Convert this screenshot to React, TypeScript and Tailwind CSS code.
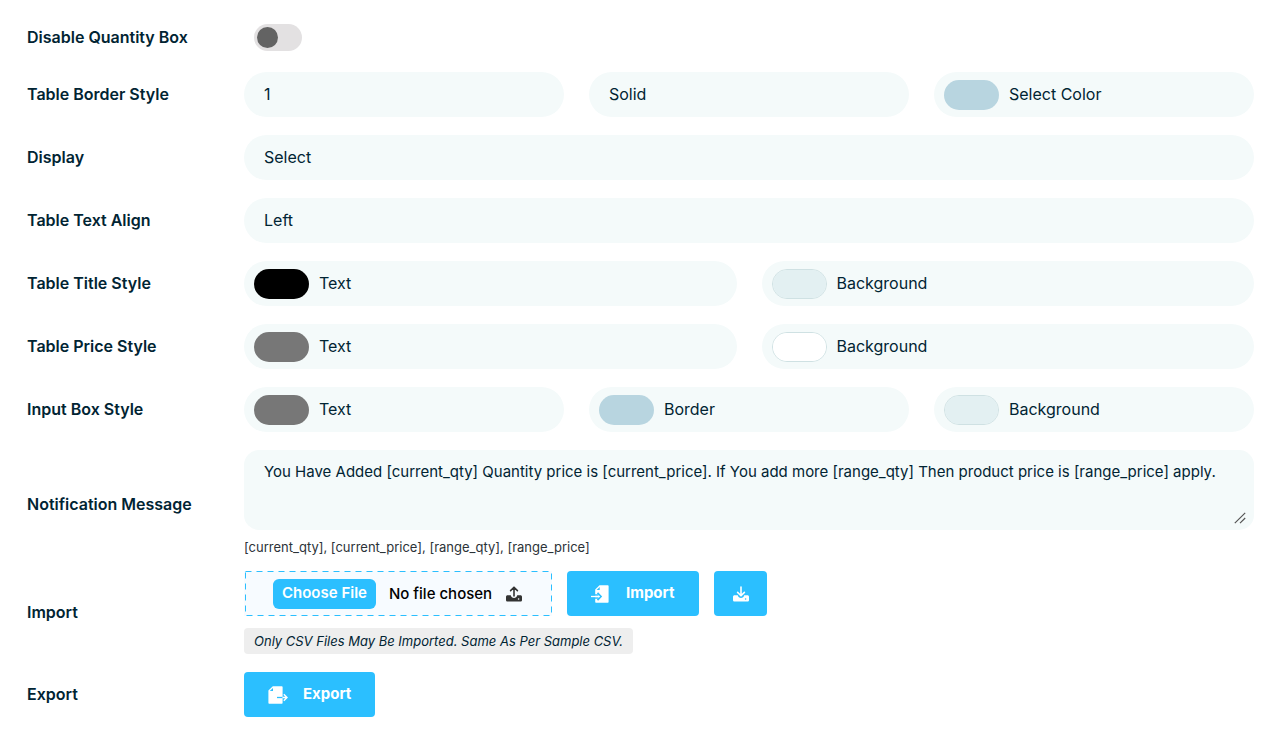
import React, { useState } from "react";

const fieldClass =
    "w-full h-[45px] rounded-full bg-[#f4fafa] px-5 pb-0.5 text-base text-[#012433] appearance-none outline-none";

const Row = ({ label, htmlFor, className = "mb-[18px]", children }: {
    label: string;
    htmlFor?: string;
    className?: string;
    children: React.ReactNode;
}) => {
    return (
        <div className={`flex items-center ${className}`}>
            <label htmlFor={htmlFor} className="w-[217px] shrink-0 pb-0.5 text-base font-semibold text-[#012433]">{label}</label>
            <div className="flex-1 min-w-0">{children}</div>
        </div>
    );
};

const SelectField = ({ id, label, options }: { id: string; label?: string; options: string[] }) => {
    const [value, setValue] = useState(options[0]);
    return (
        <select id={id} aria-label={label} value={value} onChange={(e) => setValue(e.target.value)} className={fieldClass}>
            {options.map((o) => <option key={o}>{o}</option>)}
        </select>
    );
};

const ColorField = ({ id, label, color, outlined }: { id: string; label: string; color: string; outlined?: boolean }) => {
    const [value, setValue] = useState(color);
    return (
        <div className="flex h-[45px] items-center gap-[10px] rounded-full bg-[#f4fafa] px-[10px]">
            <input
                id={id}
                type="color"
                value={value}
                onChange={(e) => setValue(e.target.value)}
                className={`h-[30px] w-[55px] shrink-0 cursor-pointer appearance-none overflow-hidden rounded-full p-0 [&::-webkit-color-swatch-wrapper]:p-0 [&::-webkit-color-swatch]:border-0 ${outlined ? "border border-[#cfe1e3]" : ""}`}
            />
            <label htmlFor={id} className="pb-0.5 text-base text-[#012433]">{label}</label>
        </div>
    );
};

// arrow over a tray, pointing up (upload) or down (download)
const TrayIcon = ({ up }: { up?: boolean }) => (
    <svg width="16" height="16" viewBox="0 0 16 16" fill="none" aria-hidden="true" className="shrink-0">
        <path fillRule="evenodd" fill="currentColor" d="M1.6 9.2H4.8C5.2 11 6.4 12 8 12S10.8 11 11.2 9.2H14.4C15.3 9.2 16 9.9 16 10.8V14C16 14.9 15.3 15.6 14.4 15.6H1.6C.7 15.6 0 14.9 0 14V10.8C0 9.9.7 9.2 1.6 9.2ZM12.6 12.2A.8.8 0 1 0 12.6 13.8A.8.8 0 1 0 12.6 12.2Z" />
        <path stroke="currentColor" strokeWidth="1.6" strokeLinecap="round" strokeLinejoin="round" d={up ? "M8 10V1.3M4.6 4.6L8 1.2L11.4 4.6" : "M8 1V9.6M4.6 6.4L8 9.8L11.4 6.4"} />
    </svg>
);

const ImportIcon = () => (
    <svg width="18" height="18" viewBox="0 0 18 18" fill="none" aria-hidden="true">
        <path fill="#fff" d="M8.5 .3H16.6C17.2 .3 17.6 .7 17.6 1.3V16.7C17.6 17.3 17.2 17.7 16.6 17.7H5.2C4.6 17.7 4.2 17.3 4.2 16.7V4.6Z" />
        <path fill="#2bbfff" d="M8.7 2V5.1H5.6Z" />
        <path stroke="#2bbfff" strokeWidth="1.5" d="M4 9.9H7.5M4 13.1H7.5" />
        <path stroke="#2bbfff" strokeWidth="1.7" d="M6.5 7.8L10 11.5L6.5 15.2" />
        <path stroke="#fff" strokeWidth="1.3" d="M0 11.5H8.5" />
    </svg>
);

const ExportIcon = () => (
    <svg width="20" height="18" viewBox="0 0 20 18" fill="none" aria-hidden="true">
        <path fill="#fff" d="M4.8 .2H13.6C14.2 .2 14.6 .6 14.6 1.2V16.8C14.6 17.4 14.2 17.8 13.6 17.8H1.4C.8 17.8 .4 17.4 .4 16.8V4.6Z" />
        <path fill="#2bbfff" d="M5 1.9V5.1H1.8Z" />
        <path stroke="#2bbfff" strokeWidth="1.3" d="M9 11.5H14.6" />
        <path stroke="#fff" strokeWidth="1.4" d="M14.6 11.5H19M15.8 8.3L19 11.5L15.8 14.7" />
    </svg>
);

const App = () => {
    const [disabled, setDisabled] = useState(false);
    const [message, setMessage] = useState(
        "You Have Added [current_qty] Quantity price is [current_price]. If You add more [range_qty] Then product price is [range_price] apply."
    );

    return (
        <div className="min-h-screen bg-white pt-[21px] pr-[30px] pb-5 pl-[27px] font-[Inter,'Liberation_Sans',sans-serif]">
            <Row label="Disable Quantity Box" htmlFor="disable-qty">
                <div className="flex h-[33px] items-center pl-[10px]">
                    <input
                        id="disable-qty"
                        type="checkbox"
                        checked={disabled}
                        onChange={(e) => setDisabled(e.target.checked)}
                        className="h-[27px] w-12 cursor-pointer appearance-none rounded-full bg-[#e3e1e2] p-[3px] before:block before:size-[21px] before:rounded-full before:bg-[#636363] checked:before:ml-auto"
                    />
                </div>
            </Row>
            <Row label="Table Border Style" htmlFor="border-width">
                <div className="grid grid-cols-3 gap-[25px]">
                    <input id="border-width" type="text" defaultValue="1" className={fieldClass} />
                    <SelectField id="border-type" label="Border type" options={["Solid", "Dashed", "Dotted"]} />
                    <ColorField id="border-color" label="Select Color" color="#b8d5e0" />
                </div>
            </Row>
            <Row label="Display" htmlFor="display">
                <SelectField id="display" options={["Select", "Table", "List"]} />
            </Row>
            <Row label="Table Text Align" htmlFor="text-align">
                <SelectField id="text-align" options={["Left", "Center", "Right"]} />
            </Row>
            <Row label="Table Title Style" htmlFor="title-text">
                <div className="grid grid-cols-2 gap-[25px]">
                    <ColorField id="title-text" label="Text" color="#000000" />
                    <ColorField id="title-bg" label="Background" color="#e3f0f2" outlined />
                </div>
            </Row>
            <Row label="Table Price Style" htmlFor="price-text">
                <div className="grid grid-cols-2 gap-[25px]">
                    <ColorField id="price-text" label="Text" color="#777777" />
                    <ColorField id="price-bg" label="Background" color="#ffffff" outlined />
                </div>
            </Row>
            <Row label="Input Box Style" htmlFor="input-text">
                <div className="grid grid-cols-3 gap-[25px]">
                    <ColorField id="input-text" label="Text" color="#777777" />
                    <ColorField id="input-border" label="Border" color="#b8d5e0" />
                    <ColorField id="input-bg" label="Background" color="#e3f0f2" outlined />
                </div>
            </Row>
            <Row label="Notification Message" htmlFor="message" className="mb-3">
                <div className="relative">
                    <textarea
                        id="message"
                        value={message}
                        onChange={(e) => setMessage(e.target.value)}
                        className="block h-20 w-full resize-none rounded-[15px] bg-[#f4fafa] px-5 py-3 text-[15px] leading-5 text-[#012433] outline-none"
                    />
                    <svg width="12" height="12" viewBox="0 0 12 12" aria-hidden="true" className="pointer-events-none absolute right-2 bottom-1.5">
                        <path d="M.8 11.2L11.2 .8M6 11.2L11.2 6" stroke="#555" strokeWidth="1.2" />
                    </svg>
                </div>
                <p className="pt-[7px] pb-[2px] text-[13px] leading-5 text-[#2c3338]">[current_qty], [current_price], [range_qty], [range_price]</p>
            </Row>
            <Row label="Import" htmlFor="csv-file">
                <div className="flex gap-[15px]">
                    <div className="relative flex h-[45px] w-[308px] items-center bg-[#f7fbff] pr-[30px] pl-[29px]">
                        <svg aria-hidden="true" className="pointer-events-none absolute inset-0 size-full">
                            <rect x="1.5" y="0.5" width="306" height="44" fill="none" stroke="#2bbfff" strokeDasharray="6 5" />
                        </svg>
                        <input
                            id="csv-file"
                            type="file"
                            accept=".csv"
                            className="min-w-0 flex-1 text-[15px] font-medium text-black file:mr-[13px] file:h-[30px] file:cursor-pointer file:rounded-md file:bg-[#2bbfff] file:px-[9px] file:text-[15px] file:font-semibold file:text-white"
                        />
                        <span className="text-[#333]"><TrayIcon up /></span>
                    </div>
                    <button type="button" className="flex h-[45px] w-[132px] cursor-pointer items-center rounded bg-[#2bbfff] pl-6 text-[15px] font-bold text-white">
                        <ImportIcon />
                        <span className="ml-[17px]">Import</span>
                    </button>
                    <button type="button" aria-label="Download sample" className="flex h-[45px] w-[53px] cursor-pointer items-center justify-center rounded bg-[#2bbfff] text-white">
                        <TrayIcon />
                    </button>
                </div>
                <p className="mt-3 w-fit rounded bg-[#eeeeee] px-[10px] text-[13px] leading-[26px] text-[#012433] italic">
                    Only CSV Files May Be Imported. Same As Per Sample CSV.
                </p>
            </Row>
            <Row label="Export" htmlFor="export-btn" className="">
                <button id="export-btn" type="button" className="flex h-[45px] w-[131px] cursor-pointer items-center rounded bg-[#2bbfff] pl-6 text-[15px] font-bold text-white">
                    <ExportIcon />
                    <span className="ml-[15px]">Export</span>
                </button>
            </Row>
        </div>
    );
};

export default App;
